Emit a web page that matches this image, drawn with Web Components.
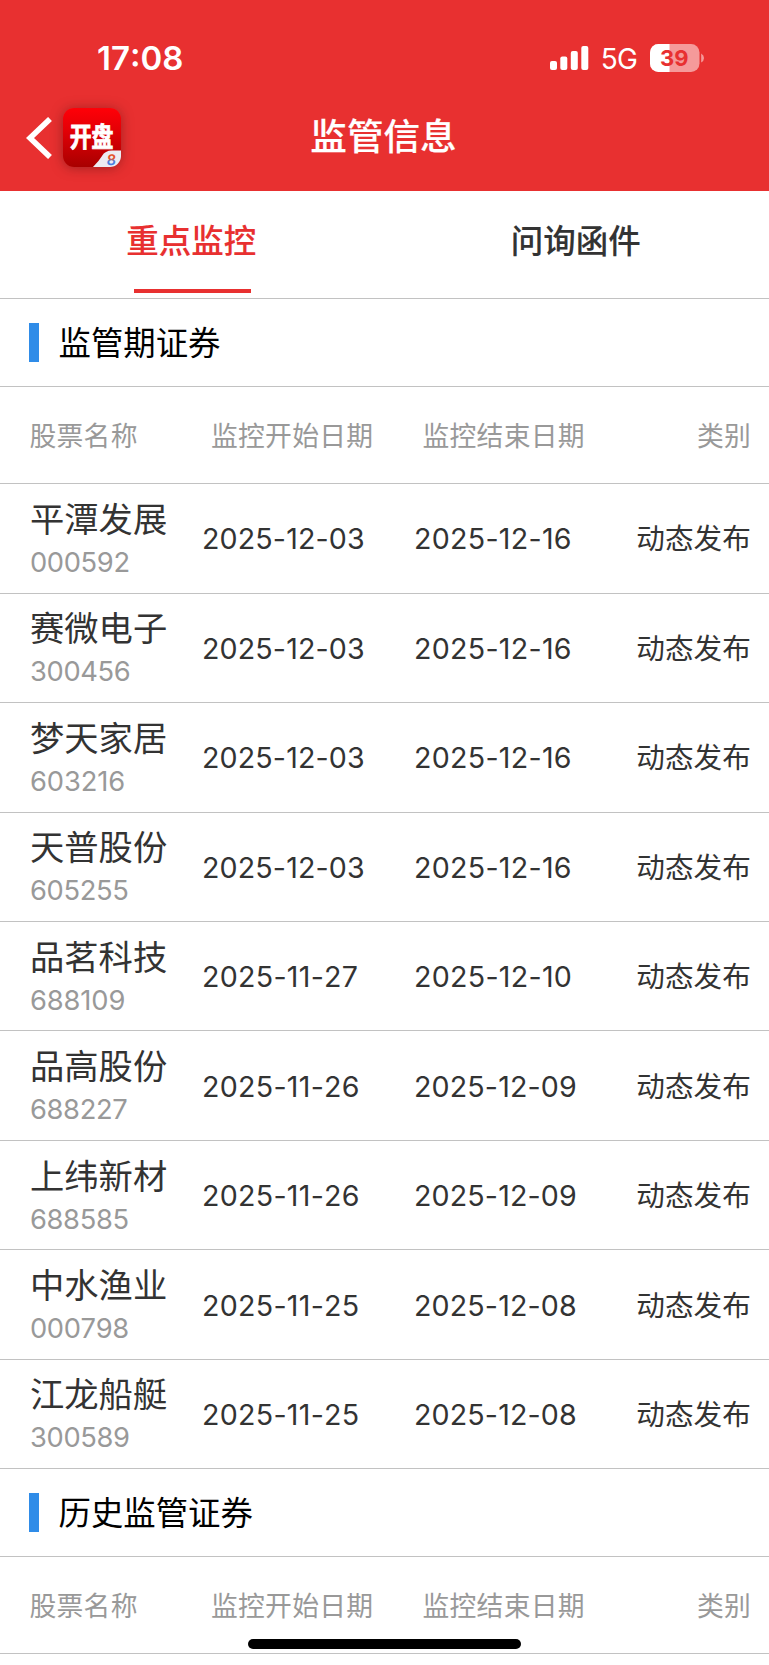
<!DOCTYPE html>
<html lang="zh-CN">
<head>
<meta charset="utf-8">
<meta name="viewport" content="width=device-width">
<title>监管信息</title>
<style>
	html { background: #fff; }
	body {
		margin: 0;
		height: 1665px;
		overflow: hidden;
		font-family: Inter, "Noto Sans CJK SC", sans-serif;
		font-kerning: none;
		color: #333;
		--red: #e83030;
		--line: #c2c2c2;
	}
</style>
</head>
<body>
<supervise-page></supervise-page>
<script>
const current = [
	["平潭发展", "000592", "2025-12-03", "2025-12-16"],
	["赛微电子", "300456", "2025-12-03", "2025-12-16"],
	["梦天家居", "603216", "2025-12-03", "2025-12-16"],
	["天普股份", "605255", "2025-12-03", "2025-12-16"],
	["品茗科技", "688109", "2025-11-27", "2025-12-10"],
	["品高股份", "688227", "2025-11-26", "2025-12-09"],
	["上纬新材", "688585", "2025-11-26", "2025-12-09"],
	["中水渔业", "000798", "2025-11-25", "2025-12-08"],
	["江龙船艇", "300589", "2025-11-25", "2025-12-08"]
];

// Inter's 1 is narrow, spread the missing width over the whole number
function tracking(str, base){
	const ones = str.split("1").length - 1;
	return `letter-spacing: ${(base + ones * 1.4 / str.length).toFixed(2)}px`;
}

class BaseElement extends HTMLElement {
	connectedCallback(){
		if(this.shadowRoot) return;
		this.attachShadow({ mode: "open" });
		this.shadowRoot.innerHTML = this.template();
	}
}

customElements.define("status-bar",
	class extends BaseElement {
		template(){
			return `
				<style>
					:host {
						display: flex;
						align-items: center;
						justify-content: space-between;
						height: 40px;
						padding: 38px 64px 0 97px;
						color: #fff;
					}
					.time { font-size: 33px; font-weight: 600; line-height: 38px; padding-bottom: 1px; }
					.right { display: flex; align-items: center; }
					.net { font-size: 28px; line-height: 40px; margin: 1px 13px 0 11.5px; letter-spacing: -0.8px; }
					svg { display: block; }
				</style>
				<span class="time">17:08</span>
				<div class="right">
					<svg width="39" height="26" viewBox="0 0 39 26" fill="#fff">
						<rect x="0" y="16" width="7" height="9" rx="2"/>
						<rect x="10.3" y="11.5" width="7" height="13.5" rx="2"/>
						<rect x="20.8" y="6" width="7" height="19" rx="2"/>
						<rect x="31.3" y="1" width="7" height="24" rx="2"/>
					</svg>
					<span class="net">5G</span>
					<svg width="55" height="28" viewBox="0 0 55 28">
						<clipPath id="shell"><rect width="49.5" height="28" rx="8.5"/></clipPath>
						<g clip-path="url(#shell)">
							<rect width="50" height="28" fill="#f59a9a"/>
							<rect width="19.5" height="28" fill="#fff"/>
						</g>
						<path d="M51.2 9.5Q54 11 54 14T51.2 18.5Z" fill="#f59a9a"/>
						<text x="24.2" y="21.800" text-anchor="middle" font-size="22" font-weight="700" fill="#e83030">39</text>
					</svg>
				</div>
			`;
		}
	}
);

customElements.define("app-logo",
	class extends BaseElement {
		template(){
			return `
				<style>
					:host { display: block; width: 58px; height: 59px; border-radius: 11px; box-shadow: 0 1px 12px rgba(90, 20, 20, .5); }
					svg { display: block; overflow: visible; }
				</style>
				<svg width="58" height="59" viewBox="0 0 58 59">
					<defs>
						<linearGradient id="bg" x2="0" y2="1">
							<stop offset="0" stop-color="#ff0008"/>
							<stop offset=".35" stop-color="#e60006"/>
							<stop offset="1" stop-color="#a80000"/>
						</linearGradient>
						<linearGradient id="eight" x2="0" y2="1">
							<stop offset=".45" stop-color="#e4512d"/>
							<stop offset=".6" stop-color="#4a7fe0"/>
						</linearGradient>
						<clipPath id="box"><rect width="58" height="59" rx="11"/></clipPath>
					</defs>
					<g clip-path="url(#box)">
						<rect width="58" height="59" fill="url(#bg)"/>
						<path d="M30 59Q36 53 39 48Q42 42.500 49 42.500H58V59Z" fill="#ececf2"/>
					</g>
					<text transform="translate(28.500 38.800) scale(.81 1)" text-anchor="middle" font-size="27" font-weight="700" fill="#fff" stroke="#fff" stroke-width=".8">开盘</text>
					<text transform="translate(48 56.500) skewX(-6)" text-anchor="middle" font-size="14.500" font-weight="600" fill="url(#eight)">8</text>
				</svg>
			`;
		}
	}
);

customElements.define("nav-bar",
	class extends BaseElement {
		template(){
			return `
				<style>
					:host {
						display: grid;
						grid-template-columns: 1fr auto 1fr;
						align-items: center;
						height: 59px;
						padding: 30px 28px 24px 26px;
						color: #fff;
					}
					.back { display: flex; align-items: center; gap: 10px; }
					h1 { margin: 0; font-size: 36.6px; font-weight: 500; line-height: 59px; -webkit-text-stroke: .2px; }
				</style>
				<div class="back">
					<svg width="27" height="42" viewBox="0 0 27 42" fill="none" stroke="#fff" stroke-width="5.600">
						<path d="M24 2L4 21L24 40"/>
					</svg>
					<app-logo></app-logo>
				</div>
				<h1><slot></slot></h1>
			`;
		}
	}
);

customElements.define("tab-item",
	class extends BaseElement {
		template(){
			return `
				<style>
					:host {
						flex: 1;
						display: flex;
						flex-direction: column;
						align-items: center;
						justify-content: space-between;
						font-size: 32.5px;
						font-weight: 500;
						line-height: 50px;
						padding: 26px 0 5px;
						-webkit-text-stroke: .1px;
					}
					:host([active]) { color: var(--red); }
					:host([active]) i { background: var(--red); }
					span { padding-right: 2px; }
					i { width: 117px; height: 4px; }
				</style>
				<span><slot></slot></span><i></i>
			`;
		}
	}
);

customElements.define("tab-strip",
	class extends BaseElement {
		template(){
			return `
				<style>
					:host { display: flex; height: 107px; border-bottom: 1px solid var(--line); }
				</style>
				<slot></slot>
			`;
		}
	}
);

customElements.define("section-title",
	class extends BaseElement {
		template(){
			return `
				<style>
					:host {
						display: flex;
						align-items: center;
						gap: 19.5px;
						box-sizing: border-box;
						height: 88.25px;
						padding-left: 29px;
						border-bottom: 1px solid var(--line);
						color: #000;
						font-size: 32.4px;
						line-height: 48px;
					}
					span { padding-top: 2px; }
					i { width: 10px; height: 39px; background: #2f8ce8; }
				</style>
				<i></i><span><slot></slot></span>
			`;
		}
	}
);

customElements.define("table-head",
	class extends BaseElement {
		template(){
			return `
				<style>
					:host {
						display: grid;
						grid-template-columns: 181.5px 211.5px 1fr auto;
						align-items: center;
						box-sizing: border-box;
						height: 97px;
						padding: 0 18px 2px 29.5px;
						border-bottom: 1px solid var(--line);
						color: #999;
						font-size: 26.8px;
						letter-spacing: .25px;
					}
				</style>
				<span>股票名称</span>
				<span>监控开始日期</span>
				<span>监控结束日期</span>
				<span>类别</span>
			`;
		}
	}
);

customElements.define("stock-row",
	class extends BaseElement {
		template(){
			const code = this.getAttribute("code");
			const start = this.getAttribute("start");
			const end = this.getAttribute("end");
			return `
				<style>
					:host {
						display: grid;
						grid-template-columns: 172px 212px 1fr auto;
						align-items: center;
						box-sizing: border-box;
						height: 109.44px;
						padding: 0 18px 0 30px;
						border-bottom: 1px solid var(--line);
						font-size: 28.6px;
					}
					.stock { padding-top: 5px; }
					.name { font-size: 34.3px; line-height: 43px; }
					.code { font-size: 27.3px; line-height: 42px; padding-top: 1px; color: #999; }
					.date { padding-top: 1px; }
					.kind { line-height: 40px; padding-top: 2px; letter-spacing: .1px; }
				</style>
				<div class="stock">
					<div class="name">${this.getAttribute("name")}</div>
					<div class="code" style="${tracking(code, -.35)}">${code}</div>
				</div>
				<span class="date" style="${tracking(start, 0)}">${start}</span>
				<span class="date" style="${tracking(end, 0)}">${end}</span>
				<span class="kind"><slot></slot></span>
			`;
		}
	}
);

customElements.define("supervise-page",
	class extends BaseElement {
		template(){
			const rows = current.map(([name, code, start, end]) =>
				`<stock-row name="${name}" code="${code}" start="${start}" end="${end}">动态发布</stock-row>`
			).join("");
			return `
				<style>
					:host { display: block; }
					header { background: var(--red); }
					.home {
						position: fixed;
						left: 247.5px;
						bottom: 16px;
						width: 273.5px;
						height: 10px;
						border-radius: 5px;
						background: #000;
					}
				</style>
				<header>
					<status-bar></status-bar>
					<nav-bar>监管信息</nav-bar>
				</header>
				<tab-strip>
					<tab-item active>重点监控</tab-item>
					<tab-item>问询函件</tab-item>
				</tab-strip>
				<section-title>监管期证券</section-title>
				<table-head></table-head>
				${rows}
				<section-title>历史监管证券</section-title>
				<table-head></table-head>
				<div class="home"></div>
			`;
		}
	}
);
</script>
</body>
</html>
